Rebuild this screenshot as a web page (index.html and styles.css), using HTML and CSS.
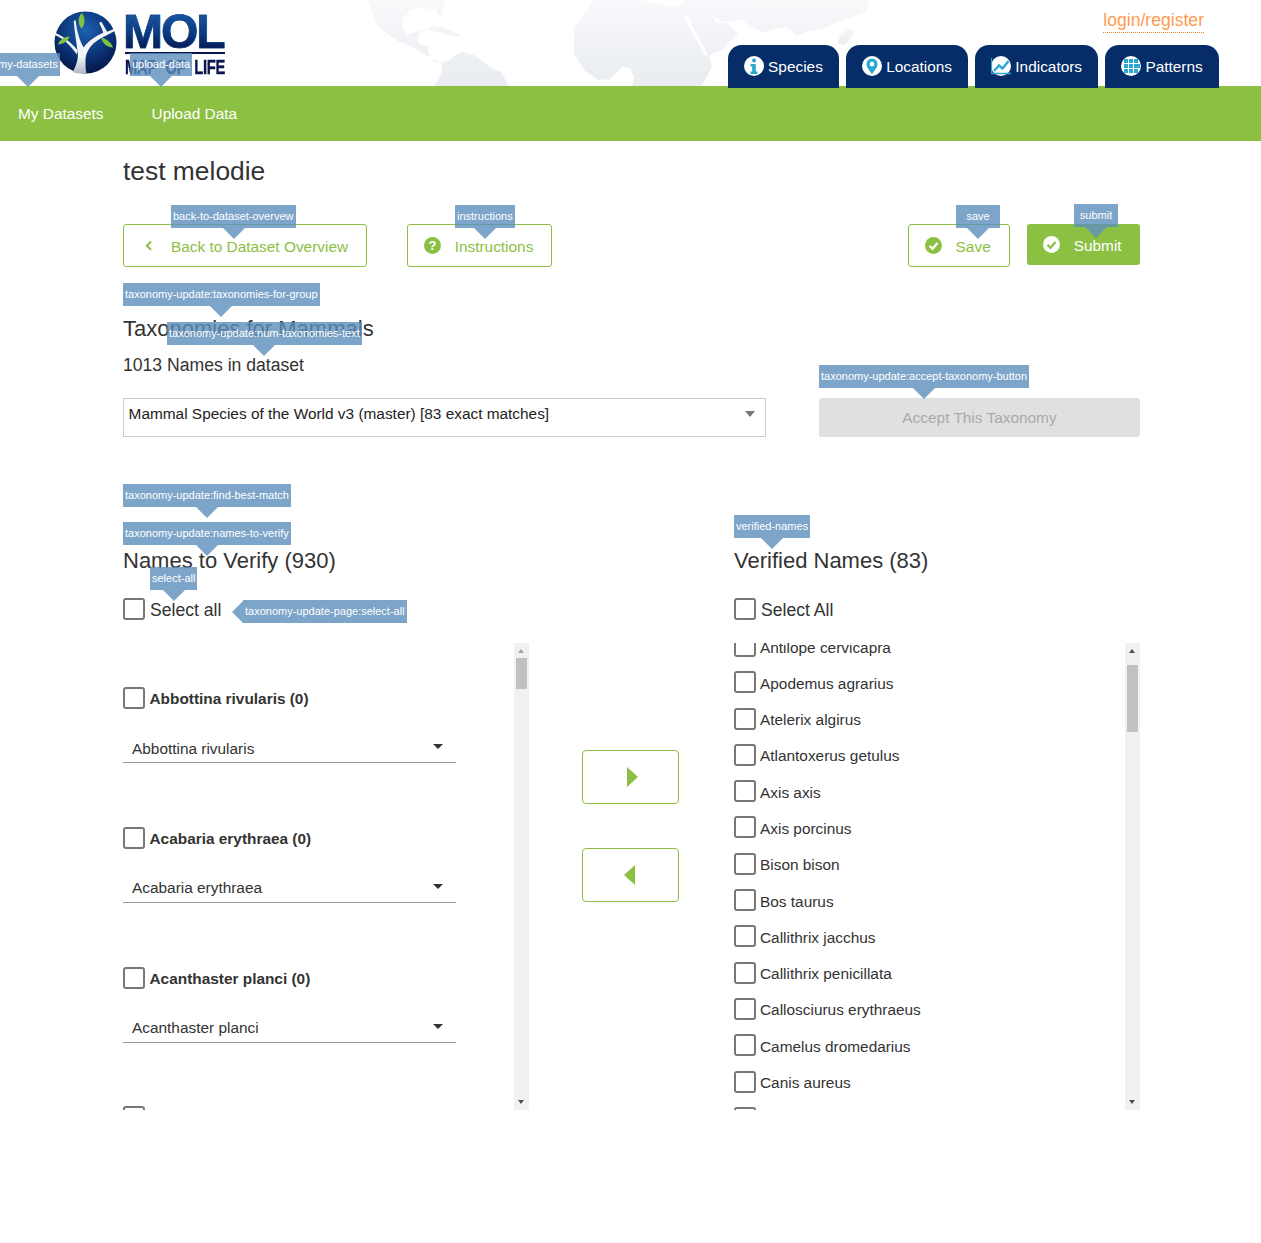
FILE: index.html
```html
<!DOCTYPE html>
<html lang="en">
<head>
<meta charset="utf-8">
<title>Taxonomy update</title>
<link rel="stylesheet" href="styles.css">
</head>
<body>
<header class="top">
  <svg class="worldmap" viewBox="0 0 1261 86" aria-hidden="true">
    <defs><linearGradient id="mapfade" x1="0" y1="0" x2="0" y2="1"><stop offset="0" stop-color="#f8f9fb"/><stop offset="1" stop-color="#e9ecf0"/></linearGradient></defs>
    <path fill="url(#mapfade)" d="M367 0L373 14 376 24 386 33 398 41 409 45 419 51 429 57 435 62 441 61 442 72 438 80 434 86H509L501 72 491 68 485 63 474 55 462 52 455 55 449 61 443 62 429 58 428 46 419 44 417 41 421 30 430 30 448 35 463 37 458 34 447 29 436 26 431 27 426 31 418 31 407 35 402 27 403 18 411 10 424 8 436 10 441 20 442 10 446 0Z"/>
    <path fill="url(#mapfade)" d="M592 0L588 10 574 27 574 53 584 70 598 80 610 79 622 67 630 68 634 77 632 86H702L712 67 709 55 722 50 738 33 727 23 716 22 712 15 703 9 722 22 742 20 752 27 766 33 770 30 787 27 797 36 806 32 822 29 840 21 866 12 868 0H684L684 4 670 7 650 2 640 0Z"/>
    <path fill="#fff" d="M682 13L688 16 695 31 701 41 707 54 708 56 704 55 698 42 691 31Z"/>
    <path fill="url(#mapfade)" d="M840 35L848 28 855 31 851 38 844 45 838 44Z"/>
  </svg>
  <a class="logo" href="#">
    <svg class="globe" viewBox="0 0 64 64" aria-hidden="true">
      <defs>
        <radialGradient id="globefill" cx="0.5" cy="0.3" r="0.75"><stop offset="0" stop-color="#1c61b1"/><stop offset="0.55" stop-color="#0b3478"/><stop offset="1" stop-color="#03103f"/></radialGradient>
        <linearGradient id="treefill" x1="0" y1="0" x2="0" y2="1"><stop offset="0" stop-color="#f2f4f7"/><stop offset="0.7" stop-color="#f2f4f7"/><stop offset="1" stop-color="#aeb6c2"/></linearGradient>
      </defs>
      <circle cx="32" cy="32" r="31.5" fill="url(#globefill)"/>
      <path fill="url(#treefill)" d="M19 62C23 55 25 48 24 42 23 33 21 22 20 10L22 9.500C23 20 26 30 30 37 35 30 43 25 50 22 49 18 47 15 46 12L48 11C50 14 52 18 54 21 57 20 59 19 61 18L62 20C55 24 46 28 40 33 35 38 32 44 32 50 32 55 32 60 33 63 28 64 23 63.500 19 62Z"/>
      <path fill="#f2f4f7" d="M24 40C18 32 10 26 1 22L1 24.500C9 28 16 34 23 44Z"/>
      <path fill="#7dc242" d="M28 2C32 6 32 13 28 18 24 13 24 7 28 2Z"/>
      <path fill="#7dc242" d="M4 34C6 29 11 26 16 26 14 31 9 34 4 34Z"/>
      <path fill="#7dc242" d="M48 27C53 28 58 32 60 37 54 37 49 33 48 27Z"/>
    </svg>
    <span class="wordmark">
      <span class="wordmark-mol">MOL</span>
      <span class="wordmark-sub"><span class="wordmark-sub-text">MAP OF LIFE</span></span>
    </span>
  </a>
  <div class="top-right">
    <a class="login" href="#">login/register</a>
    <nav class="tabs">
      <a class="tab" href="#">
        <svg class="tab-icon" viewBox="0 0 20 20" aria-hidden="true"><circle cx="10" cy="10" r="10" fill="#fff"/><circle cx="10" cy="4.600" r="2" fill="#2aa7d2"/><path fill="#2aa7d2" d="M6.600 8h5.200v7.600h1.600V18H6.600v-2.400h1.600v-5.200H6.600z"/></svg>
        Species
      </a>
      <a class="tab" href="#">
        <svg class="tab-icon" viewBox="0 0 20 20" aria-hidden="true"><circle cx="10" cy="10" r="10" fill="#fff"/><path fill="#2aa7d2" d="M10 2.500a5.600 5.600 0 0 0-5.600 5.600C4.400 12 10 18 10 18s5.600-6 5.600-9.900A5.600 5.600 0 0 0 10 2.500zm0 8a2.400 2.400 0 1 1 0-4.800 2.400 2.400 0 0 1 0 4.800z"/></svg>
        Locations
      </a>
      <a class="tab" href="#">
        <svg class="tab-icon" viewBox="0 0 20 20" aria-hidden="true"><circle cx="10" cy="10" r="10" fill="#fff"/><path fill="none" stroke="#2aa7d2" stroke-width="1.300" d="M0.500 2V17.500H20"/><path fill="none" stroke="#2aa7d2" stroke-width="2.400" d="M3 15L8 9.500 11.500 12.500 17.500 5"/></svg>
        Indicators
      </a>
      <a class="tab" href="#">
        <svg class="tab-icon" viewBox="0 0 20 20" aria-hidden="true"><circle cx="10" cy="10" r="10" fill="#fff"/><path fill="#2aa7d2" d="M3 3h4v4H3zM8 3h4v4H8zM13 3h4v4h-4zM3 8h4v4H3zM8 8h4v4H8zM13 8h6v4h-6zM3 13h4v4H3zM8 13h4v4H8zM13 13h4v4h-4z"/></svg>
        Patterns
      </a>
    </nav>
  </div>
</header>

<nav class="subnav">
  <a href="#">My Datasets</a>
  <a href="#">Upload Data</a>
</nav>

<main class="page">
  <h1 class="page-title">test melodie</h1>

  <div class="toolbar">
    <a class="btn" href="#">
      <svg class="btn-icon" viewBox="0 0 17 17" aria-hidden="true"><path fill="none" stroke="#8cc043" stroke-width="2" d="M11 4.500L6.800 8.700l4.200 4.200"/></svg>
      Back to Dataset Overview
    </a>
    <a class="btn btn-gap" href="#">
      <svg class="btn-icon" viewBox="0 0 17 17" aria-hidden="true"><circle cx="8.500" cy="8.500" r="8.500" fill="#8cc043"/><text class="icon-q" x="8.500" y="13" text-anchor="middle">?</text></svg>
      Instructions
    </a>
    <a class="btn btn-right" href="#">
      <svg class="btn-icon" viewBox="0 0 17 17" aria-hidden="true"><circle cx="8.500" cy="8.500" r="8.500" fill="#8cc043"/><path fill="none" stroke="#fff" stroke-width="2.200" d="M4.500 8.800l3 3 5-5.800"/></svg>
      Save
    </a>
    <a class="btn btn-solid" href="#">
      <svg class="btn-icon" viewBox="0 0 17 17" aria-hidden="true"><circle cx="8.500" cy="8.500" r="8.500" fill="#fff"/><path fill="none" stroke="#8cc043" stroke-width="2.200" d="M4.500 8.800l3 3 5-5.800"/></svg>
      Submit
    </a>
  </div>

  <h2 class="heading heading-tax">Taxonomies for Mammals</h2>
  <p class="count">1013 Names in dataset</p>

  <div class="taxonomy-row">
    <div class="taxonomy-select">Mammal Species of the World v3 (master) [83 exact matches]</div>
    <button class="accept" type="button" disabled>Accept This Taxonomy</button>
  </div>

  <div class="columns">
    <h2 class="heading">Names to Verify (930)</h2>
    <span></span>
    <h2 class="heading">Verified Names (83)</h2>

    <label class="select-all"><input class="check" type="checkbox"><span class="check-text">Select all</span></label>
    <span></span>
    <label class="select-all"><input class="check" type="checkbox"><span class="check-text">Select All</span></label>

    <section class="panel">
      <div class="panel-list groups">
        <div class="group">
          <label class="group-head"><input class="check" type="checkbox"><span class="check-text">Abbottina rivularis (0)</span></label>
          <div class="line-select">Abbottina rivularis</div>
        </div>
        <div class="group">
          <label class="group-head"><input class="check" type="checkbox"><span class="check-text">Acabaria erythraea (0)</span></label>
          <div class="line-select">Acabaria erythraea</div>
        </div>
        <div class="group">
          <label class="group-head"><input class="check" type="checkbox"><span class="check-text">Acanthaster planci (0)</span></label>
          <div class="line-select">Acanthaster planci</div>
        </div>
        <div class="group">
          <label class="group-head"><input class="check" type="checkbox"></label>
        </div>
      </div>
      <div class="scrollbar">
        <span class="sb-arrow sb-up sb-faded"></span>
        <span class="sb-thumb sb-thumb-left"></span>
        <span class="sb-arrow sb-down"></span>
      </div>
    </section>

    <div class="movers">
      <button class="mover" type="button"><span class="tri-right"></span></button>
      <button class="mover" type="button"><span class="tri-left"></span></button>
    </div>

    <section class="panel">
      <div class="panel-list names">
        <label class="name"><input class="check" type="checkbox"><span class="name-text">Antilope cervicapra</span></label>
        <label class="name"><input class="check" type="checkbox"><span class="name-text">Apodemus agrarius</span></label>
        <label class="name"><input class="check" type="checkbox"><span class="name-text">Atelerix algirus</span></label>
        <label class="name"><input class="check" type="checkbox"><span class="name-text">Atlantoxerus getulus</span></label>
        <label class="name"><input class="check" type="checkbox"><span class="name-text">Axis axis</span></label>
        <label class="name"><input class="check" type="checkbox"><span class="name-text">Axis porcinus</span></label>
        <label class="name"><input class="check" type="checkbox"><span class="name-text">Bison bison</span></label>
        <label class="name"><input class="check" type="checkbox"><span class="name-text">Bos taurus</span></label>
        <label class="name"><input class="check" type="checkbox"><span class="name-text">Callithrix jacchus</span></label>
        <label class="name"><input class="check" type="checkbox"><span class="name-text">Callithrix penicillata</span></label>
        <label class="name"><input class="check" type="checkbox"><span class="name-text">Callosciurus erythraeus</span></label>
        <label class="name"><input class="check" type="checkbox"><span class="name-text">Camelus dromedarius</span></label>
        <label class="name"><input class="check" type="checkbox"><span class="name-text">Canis aureus</span></label>
        <label class="name"><input class="check" type="checkbox"></label>
      </div>
      <div class="scrollbar">
        <span class="sb-arrow sb-up"></span>
        <span class="sb-thumb sb-thumb-right"></span>
        <span class="sb-arrow sb-down"></span>
      </div>
    </section>
  </div>
</main>

<div class="tip tip-down t-my-datasets">my-datasets</div>
<div class="tip tip-down t-upload">upload-data</div>
<div class="tip tip-down t-back">back-to-dataset-overvew</div>
<div class="tip tip-down t-instructions">instructions</div>
<div class="tip tip-down t-save">save</div>
<div class="tip tip-down t-submit">submit</div>
<div class="tip tip-down t-tax-group">taxonomy-update:taxonomies-for-group</div>
<div class="tip tip-down t-tax-num">taxonomy-update:num-taxonomies-text</div>
<div class="tip tip-down t-accept">taxonomy-update:accept-taxonomy-button</div>
<div class="tip tip-down t-best">taxonomy-update:find-best-match</div>
<div class="tip tip-down t-verify">taxonomy-update:names-to-verify</div>
<div class="tip tip-down t-select-all">select-all</div>
<div class="tip tip-left t-page-select">taxonomy-update-page:select-all</div>
<div class="tip tip-down t-verified">verified-names</div>
</body>
</html>
```
FILE: styles.css
```css
* { box-sizing: border-box; }
html, body { margin: 0; padding: 0; }
body {
  position: relative;
  min-height: 1243px;
  overflow-x: hidden;
  font-family: "Liberation Sans", Arial, sans-serif;
  font-size: 15.400px;
  color: #333;
  background: #fff;
}
a { text-decoration: none; color: inherit; }

/* header */
.top {
  position: relative;
  display: flex;
  justify-content: space-between;
  height: 86px;
  padding: 0 42px 0 54px;
}
.worldmap { position: absolute; left: 0; top: 0; width: 1261px; height: 86px; }
.logo { position: relative; display: flex; align-items: flex-start; gap: 8px; padding-top: 11px; }
.globe { width: 63px; height: 63px; flex: none; }
.wordmark { display: flex; flex-direction: column; width: 100px; }
.wordmark-mol {
  display: block;
  height: 41px;
  margin-left: -2px;
  font-size: 48px;
  line-height: 41px;
  font-weight: 700;
  letter-spacing: -2px;
  white-space: nowrap;
  color: transparent;
  background: linear-gradient(180deg, #1b5aa6 0%, #0a3a80 55%, #03134a 100%);
  -webkit-background-clip: text;
  background-clip: text;
  -webkit-text-stroke: 0.600px #0b3a80;
}
.wordmark-sub {
  display: block;
  height: 24px;
  border-top: 2px solid #0b1650;
  overflow: visible;
  white-space: nowrap;
  color: #0b1650;
}
.wordmark-sub-text {
  display: inline-block;
  font-size: 20.500px;
  line-height: 26px;
  font-weight: 700;
  letter-spacing: -0.400px;
  word-spacing: 7px;
  -webkit-text-stroke: 0.400px #0b1650;
  transform: scaleX(0.72);
  transform-origin: left center;
}
.top-right { position: relative; display: flex; flex-direction: column; align-items: flex-end; }
.login {
  margin: 9px 15px 0 0;
  height: 24px;
  font-size: 17.600px;
  line-height: 23px;
  color: #ff9b50;
  border-bottom: 1px dotted #f58220;
}
.tabs { display: flex; gap: 7px; margin-top: 12px; }
.tab {
  display: flex;
  align-items: center;
  gap: 4px;
  height: 43px;
  padding: 0 16.300px 0 16px;
  border-radius: 14px 14px 0 0;
  background: #062d67;
  color: #fff;
}
.tab-icon { width: 20px; height: 20px; flex: none; margin-top: -1px; }

.subnav {
  display: flex;
  gap: 48px;
  align-items: center;
  height: 55px;
  padding-left: 18px;
  background: #8cc043;
  color: #fff;
}

/* page */
.page { width: 1017px; margin-left: 123px; }
.page-title { margin: 15px 0 0; font-size: 26.400px; line-height: 30px; font-weight: 400; }
.toolbar { display: flex; align-items: flex-start; margin-top: 38px; }
.btn {
  display: flex;
  align-items: center;
  gap: 14px;
  height: 43px;
  padding: 2px 17.600px 0 16px;
  border: 1px solid #8cc043;
  border-radius: 3px;
  background: #fff;
  color: #8cc043;
}
.btn-gap { margin-left: 40px; }
.btn-right { margin-left: auto; padding-right: 18px; }
.btn-icon { width: 17px; height: 17px; flex: none; margin-top: -3px; }
.icon-q { font-size: 13px; font-weight: 700; fill: #fff; font-family: "Liberation Sans", sans-serif; }
.btn-solid {
  margin-left: 17px;
  height: 41px;
  padding-right: 18.400px;
  border: 0;
  background: #8cc043;
  color: #fff;
}

.heading { margin: 0; font-size: 22px; line-height: 30px; font-weight: 400; }
.heading-tax { margin-top: 47px; }
.count { margin: 10px 0 0; font-size: 17.600px; line-height: 22px; }

.taxonomy-row { display: flex; justify-content: space-between; margin-top: 22px; }
.taxonomy-select {
  position: relative;
  width: 643px;
  height: 39px;
  padding: 6px 4.600px;
  border: 1px solid #ccc;
  line-height: 18px;
  color: #222;
}
.taxonomy-select::after {
  content: "";
  position: absolute;
  right: 10px;
  top: 12px;
  border-style: solid;
  border-width: 6px 5.500px 0;
  border-color: #777 transparent transparent;
}
.accept {
  width: 321px;
  height: 39px;
  padding: 0;
  border: 0;
  border-radius: 3px;
  background: #e0e0e0;
  color: #aaa;
  font: inherit;
}

.columns {
  display: grid;
  grid-template-columns: 406px 205px 406px;
  margin-top: 109px;
}
.select-all { display: flex; align-items: center; gap: 5px; height: 22px; margin-top: 22px; font-size: 17.600px; }
.check-text { margin-top: 2px; }
.name-text { margin-top: 3px; }
.check {
  appearance: none;
  -webkit-appearance: none;
  display: block;
  width: 22px;
  height: 22px;
  margin: 0;
  flex: none;
  border: 2px solid #777;
  border-radius: 3px;
  background: #fff;
}

.panel { display: flex; height: 467px; margin-top: 23px; overflow: hidden; }
.panel-list { flex: 1; min-width: 0; overflow: hidden; }
.groups { padding-top: 44px; }
.group { height: 139.800px; }
.group-head { display: flex; align-items: center; gap: 4.500px; height: 22px; font-weight: 700; }
.line-select {
  position: relative;
  width: 333px;
  height: 30px;
  margin-top: 24px;
  padding: 6.700px 9px 0;
  border-bottom: 1px solid #999;
  line-height: 18px;
}
.line-select::after {
  content: "";
  position: absolute;
  right: 13px;
  top: 11px;
  border-style: solid;
  border-width: 5px 5.500px 0;
  border-color: #333 transparent transparent;
}
.names { margin-top: -8px; }
.name { display: flex; align-items: center; gap: 4px; height: 22px; margin-bottom: 14.300px; }

/* drawn scrollbars */
.scrollbar { position: relative; width: 15px; flex: none; background: #f1f1f1; }
.sb-arrow { position: absolute; left: 4px; border-style: solid; }
.sb-up { top: 6px; border-width: 0 3.500px 4px; border-color: transparent transparent #505050; }
.sb-faded { border-color: transparent transparent #a3a3a3; }
.sb-down { bottom: 6px; border-width: 4px 3.500px 0; border-color: #505050 transparent transparent; }
.sb-thumb { position: absolute; left: 2px; width: 11px; background: #c1c1c1; }
.sb-thumb-left { top: 15px; height: 31px; }
.sb-thumb-right { top: 22px; height: 67px; }

/* move buttons */
.movers { display: flex; flex-direction: column; align-items: flex-start; gap: 44px; margin-top: 23px; padding: 107px 0 0 53px; }
.mover {
  display: flex;
  align-items: center;
  justify-content: center;
  width: 97px;
  height: 54px;
  padding: 0;
  border: 1px solid #8cc043;
  border-radius: 4px;
  background: #fff;
}
.tri-right, .tri-left { display: block; border-style: solid; }
.tri-right { margin-left: 4px; border-width: 10.500px 0 10.500px 11px; border-color: transparent transparent transparent #8cc043; }
.tri-left { margin-left: -2px; border-width: 10.500px 11px 10.500px 0; border-color: transparent #8cc043 transparent transparent; }

/* tooltips */
.tip {
  position: absolute;
  height: 23px;
  padding: 0 2px;
  background: rgba(93, 142, 187, 0.8);
  color: #fff;
  font-size: 11px;
  line-height: 23px;
  white-space: nowrap;
}
.tip::after { content: ""; position: absolute; border-style: solid; }
.tip-down::after {
  left: 50%;
  top: 100%;
  margin-left: -11px;
  border-width: 11px 11px 0;
  border-color: rgba(93, 142, 187, 0.8) transparent transparent;
}
.tip-left::after {
  right: 100%;
  top: 50%;
  margin-top: -11px;
  border-width: 11px 11px 11px 0;
  border-color: transparent rgba(93, 142, 187, 0.8) transparent transparent;
}
.t-my-datasets { left: -4px; top: 53px; }
.t-upload { left: 130px; top: 53px; }
.t-back { left: 171px; top: 205px; padding-right: 3px; }
.t-instructions { left: 455px; top: 205px; }
.t-save { left: 956px; top: 205px; width: 44px; text-align: center; }
.t-submit { left: 1074px; top: 204px; width: 44px; text-align: center; }
.t-tax-group { left: 123px; top: 283px; }
.t-tax-num { left: 167px; top: 322px; }
.t-accept { left: 819px; top: 365px; }
.t-best { left: 123px; top: 484px; }
.t-verify { left: 123px; top: 522px; }
.t-select-all { left: 150px; top: 567px; }
.t-page-select { left: 243px; top: 600px; }
.t-verified { left: 734px; top: 515px; }
```
